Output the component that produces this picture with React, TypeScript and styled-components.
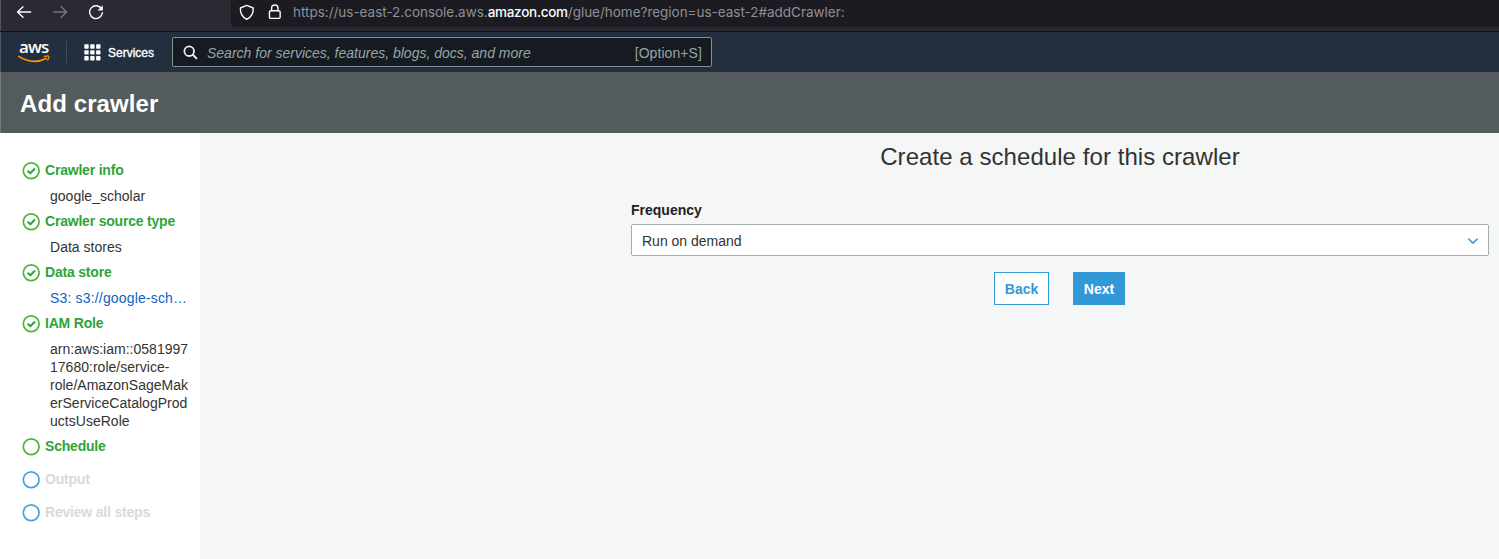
import React from "react";
import styled, { createGlobalStyle } from "styled-components";

const GlobalStyle = createGlobalStyle`
  * { box-sizing: border-box; }
  body {
    margin: 0;
    overflow: hidden;
    font-family: "Liberation Sans", Arial, sans-serif;
    font-size: 14px;
    line-height: 18px;
    color: #333;
    background: #f4f7f6;
  }
`;

const Page = styled.div`
  display: flex;
  flex-direction: column;
  height: 100vh;
`;

const BrowserBar = styled.div`
  display: flex;
  flex: none;
  height: 32px;
  background: #2b2a33;
  border-bottom: 1px solid #0f0f14;
  box-shadow: inset 1px 0 #55565c;
`;

const BrowserButtons = styled.div`
  display: flex;
  width: 231px;
  height: 24px;
  padding-left: 16px;
  gap: 20px;
  align-items: center;

  svg { display: block; }
`;

const AddressField = styled.div`
  display: flex;
  flex: 1;
  height: 27px;
  padding: 0 0 3px 8px;
  gap: 11px;
  align-items: center;
  background: #1c1b22;
  border-radius: 0 0 0 4px;
`;

const FieldIcons = styled.div`
  display: flex;
  gap: 12px;
  width: 43px;
  height: 24px;
  align-items: center;
`;

const Url = styled.span`
  font-family: Inter, sans-serif;
  font-size: 13.5px;
  letter-spacing: -0.02px;
  white-space: nowrap;
  color: #8f8f98;
`;

const UrlDomain = styled.span`
  color: #fbfbfe;
  font-weight: 500;
  letter-spacing: -0.28px;
`;

const NavBar = styled.nav`
  display: flex;
  flex: none;
  height: 40px;
  padding-left: 18px;
  align-items: center;
  background: #232f3e;
  box-shadow: inset 1px 0 #4c5763;
`;

const Divider = styled.div`
  width: 1px;
  height: 22px;
  margin: 0 17px 0 16px;
  background: #414d5c;
`;

const ServicesButton = styled.div`
  display: flex;
  width: 88px;
  gap: 7px;
  align-items: center;
  color: #fff;
  font-size: 12px;
  -webkit-text-stroke: 0.35px #fff;
`;

const ServicesText = styled.span`
  padding-top: 1px;
`;

const SearchBox = styled.div`
  display: flex;
  width: 540px;
  height: 30px;
  padding: 0 9px 0 10px;
  align-items: center;
  background: #161b21;
  border: 1px solid #839191;
  border-radius: 2px;
  color: #95a5a6;
`;

const Placeholder = styled.span`
  flex: 1;
  margin-left: 9px;
  padding-top: 1px;
  font-style: italic;
`;

const Shortcut = styled.span`
  padding-top: 1px;
  letter-spacing: 0.08px;
`;

const PageHeader = styled.header`
  display: flex;
  flex: none;
  height: 61px;
  padding: 2px 0 0 20px;
  align-items: center;
  background: #545b5c;
  box-shadow: inset 1px 0 #757b7c;
`;

const PageTitle = styled.h1`
  margin: 0;
  color: #fff;
  font-size: 24px;
  line-height: 30px;
  letter-spacing: 0.1px;
`;

const Body = styled.div`
  display: flex;
  flex: 1;
`;

const Sidebar = styled.aside`
  width: 200px;
  padding: 21px 10px 0 22px;
  background: #fff;
`;

const StepRow = styled.div<{ $pending?: boolean }>`
  display: flex;
  height: 33px;
  gap: 5px;
  align-items: center;
  color: ${(p) => (p.$pending ? "#d5dbdb" : "#2ea43a")};
  font-weight: bold;
  letter-spacing: -0.2px;

  svg { flex: none; margin-top: 1px; }
`;

const StepTitle = styled.span`
  padding-bottom: 2px;
`;

const StepDetail = styled.div<{ $link?: boolean }>`
  margin-left: 28px;
  color: ${(p) => (p.$link ? "#0c63c4" : "#333")};
  letter-spacing: ${(p) => (p.$link ? "0.17px" : "0.02px")};
  white-space: nowrap;
`;

const Main = styled.main`
  flex: 1;
  padding: 9px 10px 0 431px;
`;

const Heading = styled.h2`
  margin: 0;
  font-size: 24px;
  font-weight: normal;
  line-height: 30px;
  letter-spacing: 0.06px;
  text-align: center;
`;

const Label = styled.label`
  display: block;
  margin-top: 29px;
  color: #222;
  font-weight: bold;
`;

const Select = styled.div`
  display: flex;
  height: 32px;
  margin-top: 5px;
  padding: 1px 9px 0 10px;
  align-items: center;
  justify-content: space-between;
  background: #fff;
  border: 1px solid #a5acac;
  border-radius: 2px;
`;

const Actions = styled.div`
  display: flex;
  margin-top: 16px;
  padding-right: 1px;
  gap: 24px;
  justify-content: center;
`;

const Button = styled.button<{ $primary?: boolean }>`
  width: ${(p) => (p.$primary ? 52 : 55)}px;
  height: 33px;
  padding: 1px 0 0;
  border: 1px solid #3199d7;
  background: ${(p) => (p.$primary ? "#3199d7" : "#fff")};
  color: ${(p) => (p.$primary ? "#fff" : "#3199d7")};
  font: bold 14px "Liberation Sans", Arial, sans-serif;
`;

const Icon = ({ size = 24, children }: { size?: number; children: React.ReactNode }) => (
  <svg width={size} height={size} viewBox={`0 0 ${size} ${size}`} fill="none" strokeLinecap="round" strokeLinejoin="round">
    {children}
  </svg>
);

const BackArrow = () => (
  <Icon size={16}><path d="M14.7 8H1.6M7 2.7L1.6 8L7 13.3" stroke="#fbfbfe" strokeWidth="1.4" /></Icon>
);

const ForwardArrow = () => (
  <Icon size={16}><path d="M1.5 8H14.6M9.2 2.7L14.6 8L9.2 13.3" stroke="#77767f" strokeWidth="1.4" /></Icon>
);

const Reload = () => (
  <Icon size={16}>
    <path d="M13.6 5A6.4 6.4 0 1 0 14.4 8.8" stroke="#fbfbfe" strokeWidth="1.4" />
    <path d="M14.8 1.3V6.5H9.6Z" fill="#fbfbfe" />
  </Icon>
);

const Shield = () => (
  <Icon size={17}>
    <path d="M8.3 1L15.1 3.7C15.4 9 13.3 13.4 8.3 15.7C3.3 13.4 1.2 9 1.5 3.7Z" stroke="#fbfbfe" strokeWidth="1.5" />
  </Icon>
);

const Lock = () => (
  <Icon size={16}>
    <rect x="2.6" y="6.6" width="11.4" height="8.2" rx="1.6" stroke="#fbfbfe" strokeWidth="1.5" />
    <path d="M4.9 6.5V3.9a3.4 3.4 0 0 1 6.8 0V6.5" stroke="#fbfbfe" strokeWidth="1.5" />
  </Icon>
);

const Logo = styled.div`
  display: flex;
  flex-direction: column;
  width: 32px;
  height: 24px;
`;

const LogoWord = styled.span`
  height: 15px;
  margin-left: 1px;
  color: #fff;
  font: 600 17px/14px "Open Sans", sans-serif;
  letter-spacing: -0.8px;
`;

const AwsLogo = () => (
  <Logo>
    <LogoWord>aws</LogoWord>
    <svg width="32" height="9" viewBox="0 0 32 9" fill="none">
      <path d="M.6 1.4Q14.5 10.2 28 3.4" stroke="#ff9900" strokeWidth="1.7" strokeLinecap="round" />
      <path d="M26.4 1.4Q31.2 .2 30.9 1.6Q30.8 3.4 29.6 5.2" stroke="#ff9900" strokeWidth="1.1" strokeLinecap="round" />
    </svg>
  </Logo>
);

const AppsGrid = () => (
  <svg width="17" height="17" viewBox="0 0 17 17" fill="#fff">
    {[0.3, 6.2, 12.1].map((y) =>
      [0.3, 6.2, 12.1].map((x) => <rect key={`${x}-${y}`} x={x} y={y} width="4.4" height="4.4" rx="0.8" />)
    )}
  </svg>
);

const StepIcon = ({ done, color }: { done?: boolean; color: string }) => (
  <Icon size={18}>
    <circle cx="9.2" cy="8.8" r="7.9" stroke={color} strokeWidth="1.7" />
    {done && <path d="M5.6 8.8L8.3 11.3L13 6.5" stroke="#2ea43a" strokeWidth="2.1" strokeLinecap="butt" />}
  </Icon>
);

type Step = { title: string; detail?: string[]; link?: boolean; state: "done" | "current" | "pending" };

const steps: Step[] = [
  { title: "Crawler info", detail: ["google_scholar"], state: "done" },
  { title: "Crawler source type", detail: ["Data stores"], state: "done" },
  { title: "Data store", detail: ["S3: s3://google-sch…"], link: true, state: "done" },
  {
    title: "IAM Role",
    detail: ["arn:aws:iam::0581997", "17680:role/service-", "role/AmazonSageMak", "erServiceCatalogProd", "uctsUseRole"],
    state: "done",
  },
  { title: "Schedule", state: "current" },
  { title: "Output", state: "pending" },
  { title: "Review all steps", state: "pending" },
];

export default function App() {
  return (
    <>
      <GlobalStyle />
      <Page>
        <BrowserBar>
          <BrowserButtons>
            <BackArrow />
            <ForwardArrow />
            <Reload />
          </BrowserButtons>
          <AddressField>
            <FieldIcons>
              <Shield />
              <Lock />
            </FieldIcons>
            <Url>
              https://us-east-2.console.aws.<UrlDomain>amazon.com</UrlDomain>/glue/home?region=us-east-2#addCrawler:
            </Url>
          </AddressField>
        </BrowserBar>
        <NavBar>
          <AwsLogo />
          <Divider />
          <ServicesButton>
            <AppsGrid />
            <ServicesText>Services</ServicesText>
          </ServicesButton>
          <SearchBox>
            <Icon size={15}>
              <circle cx="6.2" cy="6.2" r="4.8" stroke="#eaeded" strokeWidth="1.8" />
              <path d="M9.8 9.8L13.4 13.4" stroke="#eaeded" strokeWidth="2" />
            </Icon>
            <Placeholder>Search for services, features, blogs, docs, and more</Placeholder>
            <Shortcut>[Option+S]</Shortcut>
          </SearchBox>
        </NavBar>
        <PageHeader>
          <PageTitle>Add crawler</PageTitle>
        </PageHeader>
        <Body>
          <Sidebar>
            {steps.map((step) => (
              <React.Fragment key={step.title}>
                <StepRow $pending={step.state === "pending"}>
                  <StepIcon done={step.state === "done"} color={step.state === "pending" ? "#44a3e0" : "#4db537"} />
                  <StepTitle>{step.title}</StepTitle>
                </StepRow>
                {step.detail?.map((line) => (
                  <StepDetail key={line} $link={step.link}>{line}</StepDetail>
                ))}
              </React.Fragment>
            ))}
          </Sidebar>
          <Main>
            <Heading>Create a schedule for this crawler</Heading>
            <Label>Frequency</Label>
            <Select>
              Run on demand
              <Icon size={12}>
                <path d="M1.8 4L6 8.1L10.2 4" stroke="#3199d7" strokeWidth="1.5" />
              </Icon>
            </Select>
            <Actions>
              <Button>Back</Button>
              <Button $primary>Next</Button>
            </Actions>
          </Main>
        </Body>
      </Page>
    </>
  );
}
